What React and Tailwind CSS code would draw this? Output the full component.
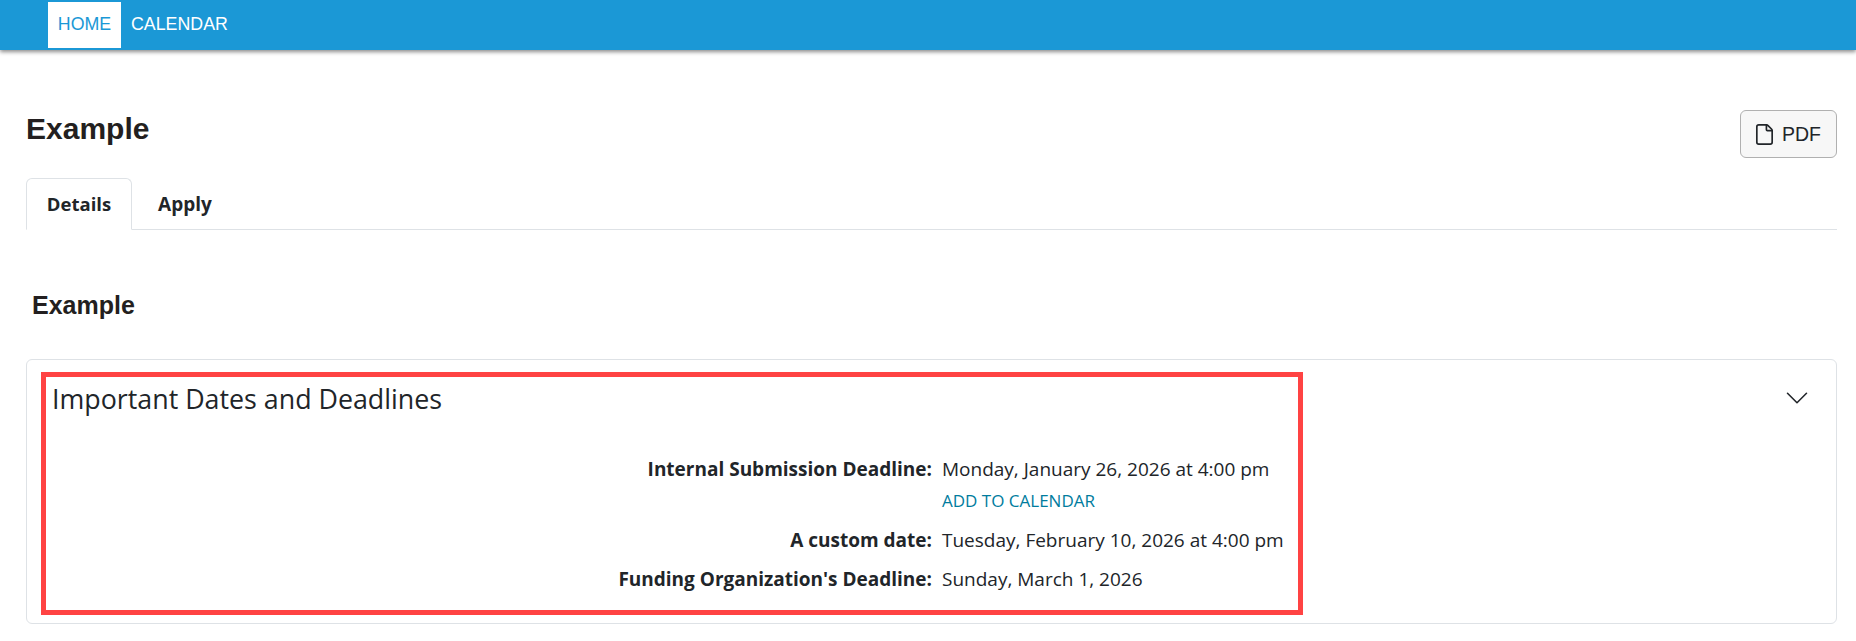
import { ChevronDown, File } from "lucide-react";

const dates = [
  { label: "Internal Submission Deadline:", value: "Monday, January 26, 2026 at 4:00 pm", link: "ADD TO CALENDAR" },
  { label: "A custom date:", value: "Tuesday, February 10, 2026 at 4:00 pm" },
  { label: "Funding Organization's Deadline:", value: "Sunday, March 1, 2026" },
];

function App() {
  return (
    <div className="min-h-screen bg-white text-[#212529] font-['Open_Sans',sans-serif] overflow-hidden">
      <nav className="h-[50px] bg-[#1b98d6] pl-[48px] pt-[2px] flex items-start shadow-[0_2px_4px_rgba(0,0,0,0.45)] font-['Liberation_Sans',sans-serif] text-[17.8px]">
        <a className="h-[46px] w-[73px] pb-[2px] bg-white text-[#1b98d6] flex items-center justify-center">HOME</a>
        <a className="h-[46px] pb-[2px] px-[10px] text-white flex items-center">CALENDAR</a>
      </nav>

      <main className="pl-[26px] pr-[19px]">
        <div className="flex justify-between items-start pt-[60px]">
          <h1 className="font-['Liberation_Sans',sans-serif] font-bold text-[30px] leading-[36px] mt-[1px] text-[#231f20]">Example</h1>
          <button className="h-[48px] w-[97px] border border-[#b0b0b0] rounded-[6px] bg-[#f7f7f7] flex items-center justify-center gap-[6px] pr-[3px] text-[19.5px] font-['Liberation_Sans',sans-serif]">
            <File size={23} strokeWidth={1.75} />
            <span className="pt-[1px]">PDF</span>
          </button>
        </div>

        <div className="flex border-b border-[#dee2e6] mt-[20px] h-[52px]">
          <div className="w-[106px] h-[52px] border border-[#dee2e6] border-b-white rounded-t-[6px] bg-white flex items-center justify-center font-bold text-[18.5px]">Details</div>
          <div className="w-[106px] pt-[2px] flex items-center justify-center font-bold text-[19px]">Apply</div>
        </div>

        <h2 className="font-['Liberation_Sans',sans-serif] font-bold text-[25px] leading-[30px] ml-[6px] mt-[60px] text-[#231f20]">Example</h2>

        <section className="mt-[39px] h-[265px] border border-[#dee2e6] rounded-[6px] flex justify-between pl-[14px] pt-[12px] pr-[20px]">
          <div className="w-[1262px] h-[243px] border-[5px] border-[#ff4343] pl-[6px]">
            <h3 className="text-[26.8px] leading-[34px] mt-[5px] font-medium">Important Dates and Deadlines</h3>
            <div className="mt-[40px] flex flex-col text-[19px]">
              {dates.map((d) => (
                <div key={d.label} className="flex gap-[10px] mb-[12px]">
                  <div className="w-[880px] text-right font-bold leading-[27px] shrink-0">{d.label}</div>
                  <div className="leading-[27px]">
                    <div>{d.value}</div>
                    {d.link && <a className="block text-[#007c9e] text-[17px] leading-[24px] mt-[6px] mb-[2px]">{d.link}</a>}
                  </div>
                </div>
              ))}
            </div>
          </div>
          <ChevronDown size={38} strokeWidth={1} className="mt-[7px]" />
        </section>
      </main>
    </div>
  );
}

export default App;
